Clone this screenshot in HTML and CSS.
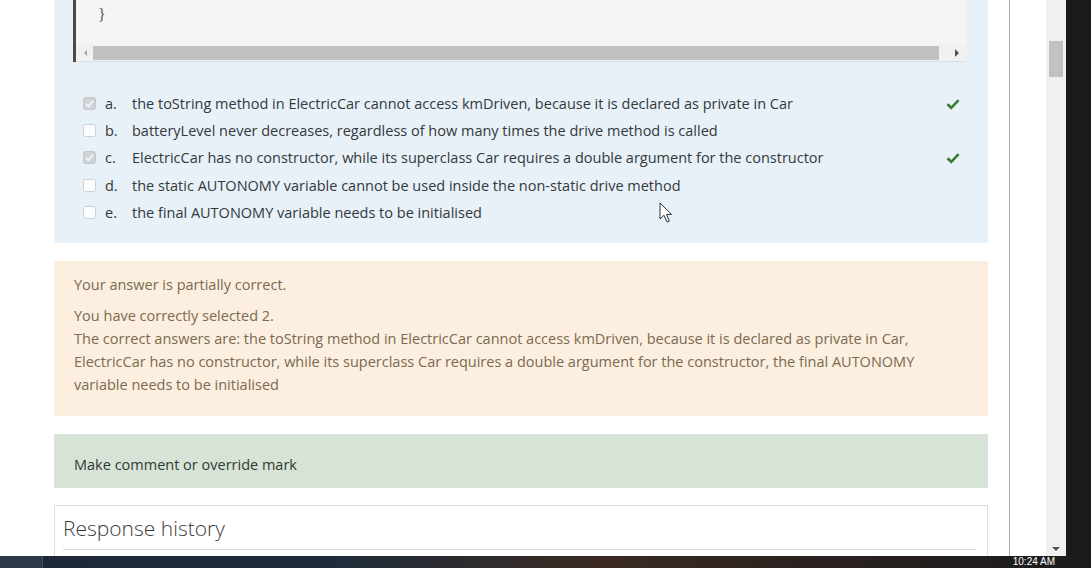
FILE: index.html
```html
<!DOCTYPE html>
<html>
<head>
<meta charset="utf-8">
<link rel="stylesheet" href="styles.css">
</head>
<body>
<div class="screen">
  <div class="window">
    <div class="page">
      <div class="content">
        <div class="formulation">
          <div class="code">
            <div class="code-text"><span class="brace">}</span></div>
            <div class="hscroll">
              <span class="arrow-left"></span>
              <span class="hthumb"></span>
              <span class="arrow-right"></span>
            </div>
          </div>
          <div class="answers">
            <div class="answer">
              <span class="cb checked"><svg viewBox="0 0 13 13" width="13" height="13"><rect x="0.5" y="0.5" width="12" height="12" rx="2" fill="#cfd2d6" stroke="#c4c7cb"/><path d="M3 6.8 L5.4 9.2 L10 3.8" fill="none" stroke="#f2f4f6" stroke-width="1.8"/></svg></span>
              <span class="letter">a.</span>
              <span class="text">the toString method in ElectricCar cannot access kmDriven, because it is declared as private in Car</span>
              <span class="tick"><svg viewBox="0 0 14 12" width="14" height="12"><path d="M1.5 6.2 L5.2 9.8 L12.6 2.2" fill="none" stroke="#3b7e2f" stroke-width="2.6"/></svg></span>
            </div>
            <div class="answer">
              <span class="cb"><svg viewBox="0 0 13 13" width="13" height="13"><rect x="0.5" y="0.5" width="12" height="12" rx="2" fill="#fbfcfd" stroke="#cdd1d6"/></svg></span>
              <span class="letter">b.</span>
              <span class="text">batteryLevel never decreases, regardless of how many times the drive method is called</span>
            </div>
            <div class="answer">
              <span class="cb checked"><svg viewBox="0 0 13 13" width="13" height="13"><rect x="0.5" y="0.5" width="12" height="12" rx="2" fill="#cfd2d6" stroke="#c4c7cb"/><path d="M3 6.8 L5.4 9.2 L10 3.8" fill="none" stroke="#f2f4f6" stroke-width="1.8"/></svg></span>
              <span class="letter">c.</span>
              <span class="text">ElectricCar has no constructor, while its superclass Car requires a double argument for the constructor</span>
              <span class="tick"><svg viewBox="0 0 14 12" width="14" height="12"><path d="M1.5 6.2 L5.2 9.8 L12.6 2.2" fill="none" stroke="#3b7e2f" stroke-width="2.6"/></svg></span>
            </div>
            <div class="answer">
              <span class="cb"><svg viewBox="0 0 13 13" width="13" height="13"><rect x="0.5" y="0.5" width="12" height="12" rx="2" fill="#fbfcfd" stroke="#cdd1d6"/></svg></span>
              <span class="letter">d.</span>
              <span class="text">the static AUTONOMY variable cannot be used inside the non-static drive method</span>
            </div>
            <div class="answer">
              <span class="cb"><svg viewBox="0 0 13 13" width="13" height="13"><rect x="0.5" y="0.5" width="12" height="12" rx="2" fill="#fbfcfd" stroke="#cdd1d6"/></svg></span>
              <span class="letter">e.</span>
              <span class="text">the final AUTONOMY variable needs to be initialised</span>
            </div>
          </div>
        </div>

        <div class="outcome">
          <p class="state">Your answer is partially correct.</p>
          <p class="detail">You have correctly selected 2.<br>The correct answers are: the toString method in ElectricCar cannot access kmDriven, because it is declared as private in Car, ElectricCar has no constructor, while its superclass Car requires a double argument for the constructor, the final AUTONOMY variable needs to be initialised</p>
        </div>

        <div class="comment">Make comment or override mark</div>

        <div class="history">
          <h3 class="history-title">Response history</h3>
        </div>
      </div>
      <div class="divider"></div>
      <div class="gutter"></div>
      <div class="vscroll">
        <span class="vthumb"></span>
        <span class="arrow-down"></span>
      </div>
    </div>
    <div class="blackstrip"></div>
    <svg class="cursor" viewBox="0 0 14 22" width="14" height="22"><path d="M1 1 L1 17 L5 13.2 L8 20 L10.4 19 L7.5 12.4 L12.6 12.4 Z" fill="#ffffff" stroke="#333" stroke-width="1"/></svg>
  </div>
  <div class="taskbar">
    <span class="task-start"></span>
    <span class="task-fill"></span>
    <span class="clock">10:24 AM</span>
  </div>
</div>
</body>
</html>
```
FILE: styles.css
```css
html, body {
  margin: 0;
  padding: 0;
  width: 1091px;
  height: 568px;
  overflow: hidden;
  background: #ffffff;
}
.screen {
  display: flex;
  flex-direction: column;
  width: 1091px;
  height: 568px;
  font-family: "Open Sans", "Noto Sans", sans-serif;
}
.window {
  position: relative;
  display: flex;
  height: 556px;
}
.page {
  display: flex;
  width: 1066px;
  height: 556px;
  background: #ffffff;
}
.content {
  width: 934px;
  padding-left: 54px;
  padding-right: 21px;
  display: flex;
  flex-direction: column;
}
.formulation {
  background: #e8f0f8;
  height: 243px;
  padding-left: 19px;
  padding-right: 22px;
  box-sizing: border-box;
  display: flex;
  flex-direction: column;
}
.code {
  border-left: 3px solid #4a4a4a;
  background: #f5f5f5;
  height: 62px;
  display: flex;
  flex-direction: column;
  justify-content: space-between;
}
.code-text {
  padding-left: 22px;
  padding-top: 6px;
  font-family: "DejaVu Sans Mono", monospace;
  font-size: 13px;
  color: #555;
  height: 20px;
}
.brace {
  font-family: "Liberation Serif", serif;
  font-size: 16px;
}
.hscroll {
  display: flex;
  align-items: center;
  height: 16px;
  border-bottom: 1px solid #dcdcdc;
  background: #f1f1f1;
}
.arrow-left {
  width: 0;
  height: 0;
  border-top: 3px solid transparent;
  border-bottom: 3px solid transparent;
  border-right: 3px solid #a3a3a3;
  margin-left: 8px;
  margin-right: 6px;
}
.hthumb {
  flex: 1;
  height: 14px;
  background: #c1c1c1;
}
.arrow-right {
  width: 0;
  height: 0;
  border-top: 4px solid transparent;
  border-bottom: 4px solid transparent;
  border-left: 4px solid #505050;
  margin-left: 16px;
  margin-right: 7px;
}
.answers {
  padding-top: 28px;
  padding-left: 10px;
  display: flex;
  flex-direction: column;
}
.answer {
  display: flex;
  align-items: center;
  height: 27.2px;
  font-size: 14.5px;
  color: #33393c;
}
.cb {
  width: 13px;
  height: 13px;
  display: flex;
  margin-right: 9px;
}
.letter {
  width: 27px;
}
.text {
  flex: 1;
}
.tick {
  display: flex;
  margin-right: 6px;
}
.outcome {
  margin-top: 18px;
  background: #fcefdf;
  padding: 12px 20px 20px 20px;
  color: #7a6a52;
  font-size: 14.5px;
  line-height: 23px;
}
.outcome p {
  margin: 0;
}
.state {
  margin-bottom: 8px !important;
}
.comment {
  margin-top: 18px;
  background: #d8e3d8;
  height: 54px;
  padding-left: 20px;
  display: flex;
  align-items: center;
  padding-top: 7px;
  box-sizing: border-box;
  font-size: 14.5px;
  color: #2d3b31;
}
.history {
  margin-top: 17px;
  border: 1px solid #dfdfdf;
  border-bottom: none;
  flex: 1;
  padding: 0 11px 0 8px;
}
.history-title {
  margin: 0;
  font-weight: 300;
  font-size: 21px;
  color: #3b3b3b;
  padding-top: 8px;
  padding-bottom: 7px;
  border-bottom: 1px solid #dcdcdc;
  line-height: 28px;
}
.divider {
  width: 1px;
  background: #aaaaaa;
}
.gutter {
  width: 36px;
  background: #ffffff;
}
.vscroll {
  width: 20px;
  background: #f0f0f0;
  display: flex;
  flex-direction: column;
  align-items: center;
  padding-top: 41px;
  box-sizing: border-box;
}
.vthumb {
  width: 14px;
  height: 36px;
  background: #c1c1c1;
}
.arrow-down {
  margin-top: auto;
  margin-bottom: 5px;
  width: 0;
  height: 0;
  border-left: 4px solid transparent;
  border-right: 4px solid transparent;
  border-top: 4px solid #505050;
}
.blackstrip {
  width: 25px;
  background: #1a1a1a;
}
.cursor {
  position: absolute;
  left: 659px;
  top: 202px;
}
.taskbar {
  height: 12px;
  display: flex;
  align-items: center;
  background: linear-gradient(90deg, #1d2935 0%, #1e2c3a 30%, #3a2a22 55%, #2a2220 75%, #1b1b1b 100%);
}
.task-start {
  width: 42px;
  height: 12px;
  background: #2c3946;
  border-right: 1px solid #445260;
}
.task-fill {
  flex: 1;
}
.clock {
  font-family: "Liberation Sans", sans-serif;
  font-size: 10px;
  color: #ffffff;
  line-height: 12px;
  margin-right: 36px;
}
```
